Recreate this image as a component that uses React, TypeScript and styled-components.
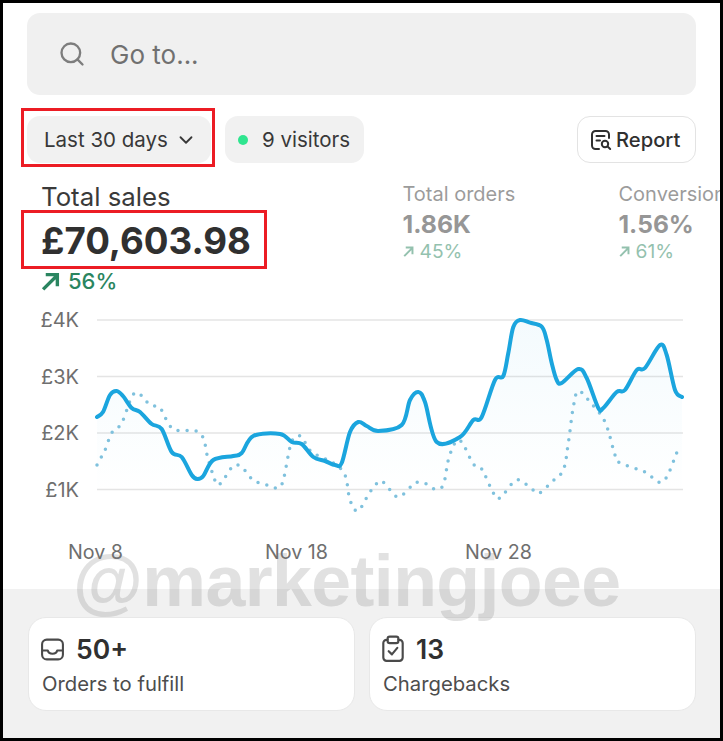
import React from "react";
import styled, { createGlobalStyle } from "styled-components";
import { ChevronDown, Search } from "lucide-react";

const GlobalStyle = createGlobalStyle`
  html, body { margin: 0; padding: 0; background: #fff; }
  * { box-sizing: border-box; }
`;

const SALES = [
  [97, 417], [103, 412], [110, 395], [116.7, 391], [123, 396], [131.7, 408], [140, 412], [151.7, 424],
  [161.7, 429], [171.7, 452], [181.7, 457], [191.7, 475], [197.3, 479], [203.3, 476], [213.3, 460],
  [233.3, 456], [241.7, 453], [253.3, 436], [280, 434], [291.7, 442], [301.7, 444], [313.3, 457],
  [325, 461], [335, 465], [341.7, 463], [350, 432], [358.3, 422], [366.7, 426], [378.3, 431],
  [401.7, 425], [410, 400], [418.3, 392], [425, 402], [436.7, 442], [460, 437], [473.3, 420],
  [481.7, 417], [495, 380], [503.3, 376], [508.3, 353], [513.3, 327], [520, 320], [530, 322.7],
  [541.7, 326.7], [546.7, 340], [551.7, 363], [556.7, 380],
  [561.7, 383], [578.3, 369], [586.7, 378], [598.3, 408], [603.3, 408], [616.7, 392], [625, 390],
  [636.7, 370], [645, 368], [660, 345], [666.7, 355], [675, 390], [682, 397],
];

const PREVIOUS = [
  [97, 465], [105, 450], [111.7, 433], [121.7, 423], [131.7, 397], [138.3, 393], [150, 405], [160, 408],
  [173.3, 429], [200, 433], [208.3, 460], [216.7, 484], [223, 480], [233.3, 466], [241.7, 467],
  [253.3, 480], [270, 486], [278.3, 488], [283.3, 480], [290, 447], [295, 437], [301.7, 437],
  [311.7, 452], [333.3, 463], [345, 475], [350, 500], [358, 511], [370, 492], [380, 481], [386.7, 486],
  [398.3, 497], [411.7, 486], [418.3, 482], [426.7, 484], [435, 489], [443.3, 485], [448.3, 460],
  [455, 443], [461.7, 442], [473.3, 464], [481.7, 469], [493.3, 493], [500, 498], [516.7, 480],
  [531.7, 489], [539.3, 493], [551.7, 482], [563.3, 470], [568.3, 443], [573.3, 407], [578.3, 391],
  [590, 402], [605, 422], [615, 455], [620, 463], [645, 472], [658.3, 482], [666.7, 477], [677, 452],
];

const GRID = [
  { y: 320, label: "£4K" },
  { y: 376.5, label: "£3K" },
  { y: 433, label: "£2K" },
  { y: 489.5, label: "£1K" },
];

const DATES = [
  { x: 68, label: "Nov 8" },
  { x: 265, label: "Nov 18" },
  { x: 465, label: "Nov 28" },
];

// catmull-rom through the sampled points
const smooth = (pts: number[][]) => {
  let d = `M${pts[0][0]} ${pts[0][1]}`;
  for (let i = 0; i < pts.length - 1; i++) {
    const p0 = pts[i - 1] || pts[i];
    const p1 = pts[i];
    const p2 = pts[i + 1];
    const p3 = pts[i + 2] || p2;
    const c1x = p1[0] + (p2[0] - p0[0]) / 6;
    const c1y = p1[1] + (p2[1] - p0[1]) / 6;
    const c2x = p2[0] - (p3[0] - p1[0]) / 6;
    const c2y = p2[1] - (p3[1] - p1[1]) / 6;
    d += ` C${c1x.toFixed(1)} ${c1y.toFixed(1)} ${c2x.toFixed(1)} ${c2y.toFixed(1)} ${p2[0]} ${p2[1]}`;
  }
  return d;
};

const Frame = styled.div`
  position: relative;
  width: 723px;
  height: 741px;
  border: 3px solid #000;
  background: #fff;
  overflow: hidden;
  display: flex;
  flex-direction: column;
  font-family: Inter, "Liberation Sans", sans-serif;
  color: #303030;
`;

const Top = styled.div`
  flex: 1;
  padding: 10px 24px 0;
`;

const SearchBar = styled.div`
  height: 82px;
  border-radius: 13px;
  background: #f0f0f0;
  display: flex;
  align-items: center;
  gap: 24px;
  padding-left: 31px;
  color: #707070;
  font-size: 26px;
`;

const FilterRow = styled.div`
  display: flex;
  align-items: center;
  gap: 14px;
  margin-top: 21px;
`;

const Pill = styled.div<{ $width: number; $pad: number }>`
  position: relative;
  width: ${(p) => p.$width}px;
  height: 47px;
  border-radius: 13px;
  background: #f1f1f1;
  display: flex;
  align-items: center;
  font-size: 20.5px;
  padding-left: ${(p) => p.$pad}px;
  color: #383838;
`;

const Highlight = styled.span<{ $t: number; $r: number; $b: number; $l: number }>`
  position: absolute;
  top: ${(p) => p.$t}px;
  right: ${(p) => p.$r}px;
  bottom: ${(p) => p.$b}px;
  left: ${(p) => p.$l}px;
  border: 3px solid #ec1c24;
  pointer-events: none;
`;

const Dot = styled.span`
  width: 10px;
  height: 10px;
  border-radius: 50%;
  background: #2fe58f;
  margin-right: 14px;
`;

const ReportButton = styled.div`
  margin-left: auto;
  width: 119px;
  height: 47px;
  border-radius: 13px;
  border: 1.5px solid #e3e3e3;
  background: #fff;
  display: flex;
  align-items: center;
  gap: 3px;
  padding-left: 11px;
  font-size: 20.2px;
  font-weight: 450;
  color: #303030;
`;

const Stats = styled.div`
  display: grid;
  grid-template-columns: 361.5px 216px 200px;
  margin: 18px 0 0 14px;
  white-space: nowrap;
`;

const Stat = styled.div<{ $muted?: boolean }>`
  display: flex;
  flex-direction: column;
  align-items: flex-start;
  opacity: ${(p) => (p.$muted ? 0.5 : 1)};
`;

const StatLabel = styled.div<{ $size: number; $height: number }>`
  font-size: ${(p) => p.$size}px;
  line-height: ${(p) => p.$height}px;
  color: #3a3a3a;
`;

const StatValue = styled.div<{ $size: number; $height: number }>`
  position: relative;
  font-size: ${(p) => p.$size}px;
  line-height: ${(p) => p.$height}px;
  font-weight: 700;
  color: #303030;
`;

const Delta = styled.div<{ $size: number; $weight: number; $height: number; $gap: number }>`
  display: flex;
  align-items: center;
  gap: ${(p) => p.$gap}px;
  font-size: ${(p) => p.$size}px;
  font-weight: ${(p) => p.$weight};
  line-height: ${(p) => p.$height}px;
  color: #2a8560;
`;

const Chart = styled.svg`
  display: block;
  width: 717px;
  height: 289px;
  margin: 7px -24px 0;
  font-family: Inter, "Liberation Sans", sans-serif;
`;

const Bottom = styled.div`
  height: 149px;
  background: #f1f1f1;
  display: grid;
  grid-template-columns: 327px 327px;
  gap: 14px;
  padding: 28px 0 0 24.5px;
`;

const Card = styled.div`
  height: 94px;
  border-radius: 18px;
  border: 1.5px solid #e8e8e8;
  background: #fff;
  padding: 14px 11px 0;
`;

const CardHead = styled.div`
  display: flex;
  align-items: center;
  gap: 11.5px;
  height: 34px;
  font-size: 26.5px;
  font-weight: 600;
  color: #303030;
`;

const CardLabel = styled.div`
  margin: 5px 0 0 2.5px;
  font-size: 20.3px;
  color: #4d4d4d;
`;

const Watermark = styled.div`
  position: absolute;
  left: 70px;
  top: 533px;
  font-family: "Liberation Sans", Arial, sans-serif;
  font-size: 71.7px;
  line-height: 90px;
  font-weight: 700;
  letter-spacing: -0.6px;
  color: rgba(120, 120, 120, 0.22);
  white-space: nowrap;
  pointer-events: none;
`;

const TrendArrow = ({ size }: { size: number }) => (
  <svg width={size} height={size} viewBox="0 0 18 18" fill="none" stroke="currentColor" strokeWidth="3.2">
    <path d="M2 16.500L15 3.500M4.500 2.500H15.500V13.500" />
  </svg>
);

const ReportIcon = () => (
  <svg width="24" height="24" viewBox="0 0 24 24" fill="none" stroke="#303030" strokeWidth="2" strokeLinecap="round">
    <path d="M10 21H6.500A3.500 3.500 0 0 1 3 17.500v-11A3.500 3.500 0 0 1 6.500 3h10A3.500 3.500 0 0 1 20 6.500V10" />
    <path d="M7.500 8h8M7.500 12.500h3.500" />
    <circle cx="16" cy="16" r="3.200" />
    <path d="M18.600 18.600l2.600 2.400" />
  </svg>
);

const InboxIcon = () => (
  <svg width="25" height="25" viewBox="0 0 24 24" fill="none" stroke="#4a4a4a" strokeWidth="2" strokeLinejoin="round">
    <rect x="2" y="2.500" width="20" height="19" rx="4.500" />
    <path d="M2 13h5.500c.4 2 2.200 3 4.500 3s4.100-1 4.500-3H22" />
  </svg>
);

const ClipboardIcon = () => (
  <svg width="24" height="28" viewBox="0 0 22 26" fill="none" stroke="#4a4a4a" strokeWidth="2" strokeLinecap="round" strokeLinejoin="round">
    <path d="M6 4.500H5a3 3 0 0 0-3 3V21a3 3 0 0 0 3 3h12a3 3 0 0 0 3-3V7.500a3 3 0 0 0-3-3h-1" />
    <rect x="6" y="1.500" width="10" height="6" rx="2" />
    <path d="M7 15l3 3 5-6" />
  </svg>
);

const App: React.FC = () => {
  const line = smooth(SALES);
  const area = `${line} L682 495 L97 495 Z`;

  return (
    <>
      <GlobalStyle />
      <Frame>
        <Top>
          <SearchBar>
            <Search size={28} color="#7d7d7d" strokeWidth={2} />
            Go to...
          </SearchBar>
          <FilterRow>
            <Pill $width={184} $pad={17}>
              Last 30 days
              <ChevronDown size={22} strokeWidth={2} style={{ marginLeft: 7 }} />
              <Highlight $t={-8} $r={-4} $b={-4} $l={-6} />
            </Pill>
            <Pill $width={139} $pad={13}>
              <Dot />9 visitors
            </Pill>
            <ReportButton>
              <ReportIcon />
              Report
            </ReportButton>
          </FilterRow>
          <Stats>
            <Stat>
              <StatLabel $size={25.8} $height={32}>Total sales</StatLabel>
              <StatValue $size={36.7} $height={56}>
                £70,603.98
                <Highlight $t={-3} $r={-16} $b={0} $l={-20} />
              </StatValue>
              <Delta $size={22} $weight={500} $height={24} $gap={8}>
                <TrendArrow size={19} />
                56%
              </Delta>
            </Stat>
            <Stat $muted>
              <StatLabel $size={20} $height={26}>Total orders</StatLabel>
              <StatValue $size={24.8} $height={34}>1.86K</StatValue>
              <Delta $size={19.2} $weight={400} $height={20} $gap={6}>
                <TrendArrow size={11} />
                45%
              </Delta>
            </Stat>
            <Stat $muted>
              <StatLabel $size={20} $height={26}>Conversion rate</StatLabel>
              <StatValue $size={24.6} $height={34}>1.56%</StatValue>
              <Delta $size={19.2} $weight={400} $height={20} $gap={6}>
                <TrendArrow size={11} />
                61%
              </Delta>
            </Stat>
          </Stats>
          <Chart viewBox="3 300 717 289">
            <defs>
              <linearGradient id="salesFill" x1="0" y1="320" x2="0" y2="495" gradientUnits="userSpaceOnUse">
                <stop offset="0" stopColor="#1ba5de" stopOpacity="0.05" />
                <stop offset="1" stopColor="#1ba5de" stopOpacity="0" />
              </linearGradient>
            </defs>
            {GRID.map((g) => (
              <g key={g.y}>
                <line x1="97" x2="683" y1={g.y} y2={g.y} stroke="#e4e4e4" strokeWidth="1.5" />
                <text x="79" y={g.y + 7} textAnchor="end" fontSize="20" fill="#6f6f6f">
                  {g.label}
                </text>
              </g>
            ))}
            <path d={area} fill="url(#salesFill)" />
            <path d={smooth(PREVIOUS)} fill="none" stroke="#7fc1dd" strokeWidth="3.5" strokeLinecap="round" strokeDasharray="0 9" />
            <path d={line} fill="none" stroke="#1ba5de" strokeWidth="4" strokeLinecap="round" strokeLinejoin="round" />
            {DATES.map((d) => (
              <text key={d.x} x={d.x} y="559" fontSize="19.7" fill="#6f6f6f">
                {d.label}
              </text>
            ))}
          </Chart>
        </Top>
        <Bottom>
          <Card>
            <CardHead>
              <InboxIcon />
              50+
            </CardHead>
            <CardLabel>Orders to fulfill</CardLabel>
          </Card>
          <Card>
            <CardHead>
              <ClipboardIcon />
              13
            </CardHead>
            <CardLabel>Chargebacks</CardLabel>
          </Card>
        </Bottom>
        <Watermark>@marketingjoee</Watermark>
      </Frame>
    </>
  );
};

export default App;
